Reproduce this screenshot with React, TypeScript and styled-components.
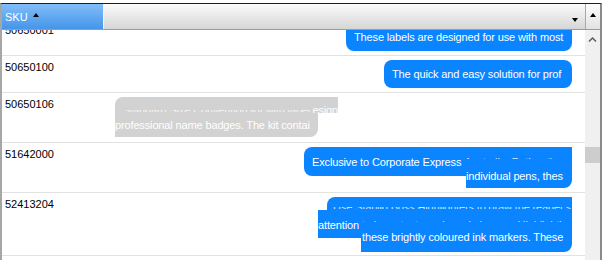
import styled, { createGlobalStyle } from "styled-components"

const GlobalStyle = createGlobalStyle`
  html, body {
    margin: 0;
    padding: 0;
    background: #fff;
  }
  body {
    font-family: "Liberation Sans", Arial, sans-serif;
    font-size: 11px;
  }
`

type Tone = "blue" | "grey"

type Seg = {
  w: number
  h: number
  r: string
  pt: number
  pl: number
  mt?: number
  lead?: string
  ghost?: string
  clip?: [number, number]
  tail?: string
}

type RowData = {
  sku: string
  h: number
  side: "left" | "right"
  tone: Tone
  segs: Seg[]
}

const rows: RowData[] = [
  {
    sku: "50650001",
    h: 37,
    side: "right",
    tone: "blue",
    segs: [{ w: 226, h: 28, r: "8px", pt: 7, pl: 8, lead: "These labels are designed for use with most" }],
  },
  {
    sku: "50650100",
    h: 37,
    side: "right",
    tone: "blue",
    segs: [{ w: 188, h: 28, r: "8px", pt: 7, pl: 8, lead: "The quick and easy solution for prof" }],
  },
  {
    sku: "50650106",
    h: 50,
    side: "left",
    tone: "grey",
    segs: [
      { w: 223, h: 16, r: "8px 0 0 0", pt: 6, pl: 8, ghost: "Standard Size Convention Kit with label d", clip: [7, 5], tail: "esign" },
      { w: 203, h: 24, r: "0 0 8px 0", pt: 5, pl: 0, lead: "professional name badges. The kit contai" },
    ],
  },
  {
    sku: "51642000",
    h: 50,
    side: "right",
    tone: "blue",
    segs: [
      { w: 268, h: 29, r: "8px 0 0 8px", pt: 8, pl: 8, lead: "Exclusive to Corporate Express ", ghost: "Australia. Rather than", clip: [2, 10] },
      { w: 106, h: 23, mt: -11, r: "0 0 8px 0", pt: 4, pl: 0, lead: "individual pens, thes" },
    ],
  },
  {
    sku: "52413204",
    h: 63,
    side: "right",
    tone: "blue",
    segs: [
      { w: 245, h: 13, r: "8px 0 0 0", pt: 3, pl: 6, ghost: "Use Stabilo Boss Highlighters to draw the reader's", clip: [7, 5] },
      { w: 254, h: 28, r: "0", pt: 8, pl: 0, lead: "attention ", ghost: "to important words and phrases. Highlighting with", clip: [2, 10] },
      { w: 211, h: 24, mt: -10, r: "0 0 8px 0", pt: 2, pl: 1, lead: "these brightly coloured ink markers. These" },
    ],
  },
]

const scrollTop = 11
const thumbTop = 117

const Grid = styled.div`
  width: 602px;
  height: 257px;
  margin-top: 3px;
  box-sizing: border-box;
  border-top: 1px solid #1e1e1e;
  border-left: 2px solid #a6a6a6;
  border-right: 2px solid #8a8a8a;
  display: flex;
  flex-direction: column;
`

const HeaderRow = styled.div`
  display: flex;
  height: 26px;
  box-sizing: border-box;
  border-bottom: 1px solid #9c9c9c;
  flex-shrink: 0;
`

const SortHeader = styled.div`
  width: 101px;
  box-sizing: border-box;
  padding-left: 3px;
  display: flex;
  align-items: center;
  gap: 5px;
  color: #fff;
  background: linear-gradient(#82bdf8, #4595ea);
`

const SortArrow = styled.span`
  align-self: flex-start;
  margin-top: 9px;
  width: 0;
  height: 0;
  border-left: 3.5px solid transparent;
  border-right: 3.5px solid transparent;
  border-bottom: 4px solid #000;
`

const FillHeader = styled.div`
  flex: 1;
  box-sizing: border-box;
  border-left: 1px solid #f4f4f4;
  display: flex;
  justify-content: flex-end;
  align-items: flex-end;
  padding: 0 7px 7px 0;
  background: linear-gradient(#fbfbfb, #d6d6d6);
`

const DropArrow = styled.span`
  width: 0;
  height: 0;
  border-left: 3.5px solid transparent;
  border-right: 3.5px solid transparent;
  border-top: 4px solid #000;
`

const ScrollCap = styled.div`
  width: 15px;
  box-sizing: border-box;
  border-left: 1px solid #a8a8a8;
  display: flex;
  justify-content: center;
  padding-top: 9px;
  background: linear-gradient(#fdfdfd, #e2e2e2);
`

const UpArrow = styled.span`
  width: 0;
  height: 0;
  border-left: 3px solid transparent;
  border-right: 3px solid transparent;
  border-bottom: 4px solid #000;
`

const BodyArea = styled.div`
  flex: 1;
  display: flex;
  min-height: 0;
`

const Viewport = styled.div`
  flex: 1;
  overflow: hidden;
`

const Rows = styled.div``

const Row = styled.div<{ $h: number }>`
  display: flex;
  height: ${(p) => p.$h}px;
  box-sizing: border-box;
  border-bottom: 1px solid #e2e2e2;
`

const SkuCell = styled.div`
  width: 101px;
  flex-shrink: 0;
  box-sizing: border-box;
  padding: 4px 0 0 3px;
  line-height: 14px;
  color: #000;
`

const MessageCell = styled.div<{ $side: "left" | "right" }>`
  flex: 1;
  display: flex;
  flex-direction: column;
  align-items: ${(p) => (p.$side === "right" ? "flex-end" : "flex-start")};
  padding: 4px 13px 0 12px;
`

const Segment = styled.div<{ $w: number; $h: number; $r: string; $pt: number; $pl: number; $mt: number; $tone: Tone }>`
  position: relative;
  box-sizing: border-box;
  flex-shrink: 0;
  width: ${(p) => p.$w}px;
  height: ${(p) => p.$h}px;
  margin-top: ${(p) => p.$mt}px;
  padding: ${(p) => p.$pt}px 0 0 ${(p) => p.$pl}px;
  border-radius: ${(p) => p.$r};
  background: ${(p) => (p.$tone === "grey" ? "#d2d2d2" : "#0a84ff")};
  color: #fff;
  display: flex;
  align-items: flex-start;
  line-height: 14px;
  white-space: pre;
  letter-spacing: -0.14px;
`

const Ghost = styled.span<{ $top: number; $bottom: number }>`
  display: block;
  flex: 1;
  min-width: 0;
  height: 14px;
  overflow: hidden;
  opacity: 0.8;
  clip-path: inset(${(p) => p.$top}px 0 ${(p) => p.$bottom}px 0);
`

const Track = styled.div`
  width: 15px;
  flex-shrink: 0;
  background: #f0f0f0;
  display: flex;
  flex-direction: column;
  align-items: center;
`

const Chevron = styled.svg`
  margin-top: 7px;
  display: block;
`

const Thumb = styled.div`
  width: 15px;
  height: 16px;
  background: #cdcdcd;
`

export default function App() {
  return (
    <>
      <GlobalStyle />
      <Grid>
        <HeaderRow>
          <SortHeader>
            SKU
            <SortArrow />
          </SortHeader>
          <FillHeader>
            <DropArrow />
          </FillHeader>
          <ScrollCap>
            <UpArrow />
          </ScrollCap>
        </HeaderRow>
        <BodyArea>
          <Viewport>
            <Rows style={{ marginTop: -scrollTop }}>
              {rows.map((row) => (
                <Row key={row.sku} $h={row.h}>
                  <SkuCell>{row.sku}</SkuCell>
                  <MessageCell $side={row.side}>
                    {row.segs.map((s, i) => (
                      <Segment
                        key={i}
                        $w={s.w}
                        $h={s.h}
                        $r={s.r}
                        $pt={s.pt}
                        $pl={s.pl}
                        $mt={s.mt ?? 0}
                        $tone={row.tone}
                      >
                        {s.lead && <span>{s.lead}</span>}
                        {s.ghost && (
                          <Ghost $top={s.clip?.[0] ?? 0} $bottom={s.clip?.[1] ?? 0}>
                            {s.ghost}
                          </Ghost>
                        )}
                        {s.tail && <span>{s.tail}</span>}
                      </Segment>
                    ))}
                  </MessageCell>
                </Row>
              ))}
            </Rows>
          </Viewport>
          <Track>
            <Chevron width="9" height="5" viewBox="0 0 9 5">
              <polyline points="1,4.5 4.5,1 8,4.5" fill="none" stroke="#555" strokeWidth="1.4" />
            </Chevron>
            <Thumb style={{ marginTop: thumbTop - 12 }} />
          </Track>
        </BodyArea>
      </Grid>
    </>
  )
}
